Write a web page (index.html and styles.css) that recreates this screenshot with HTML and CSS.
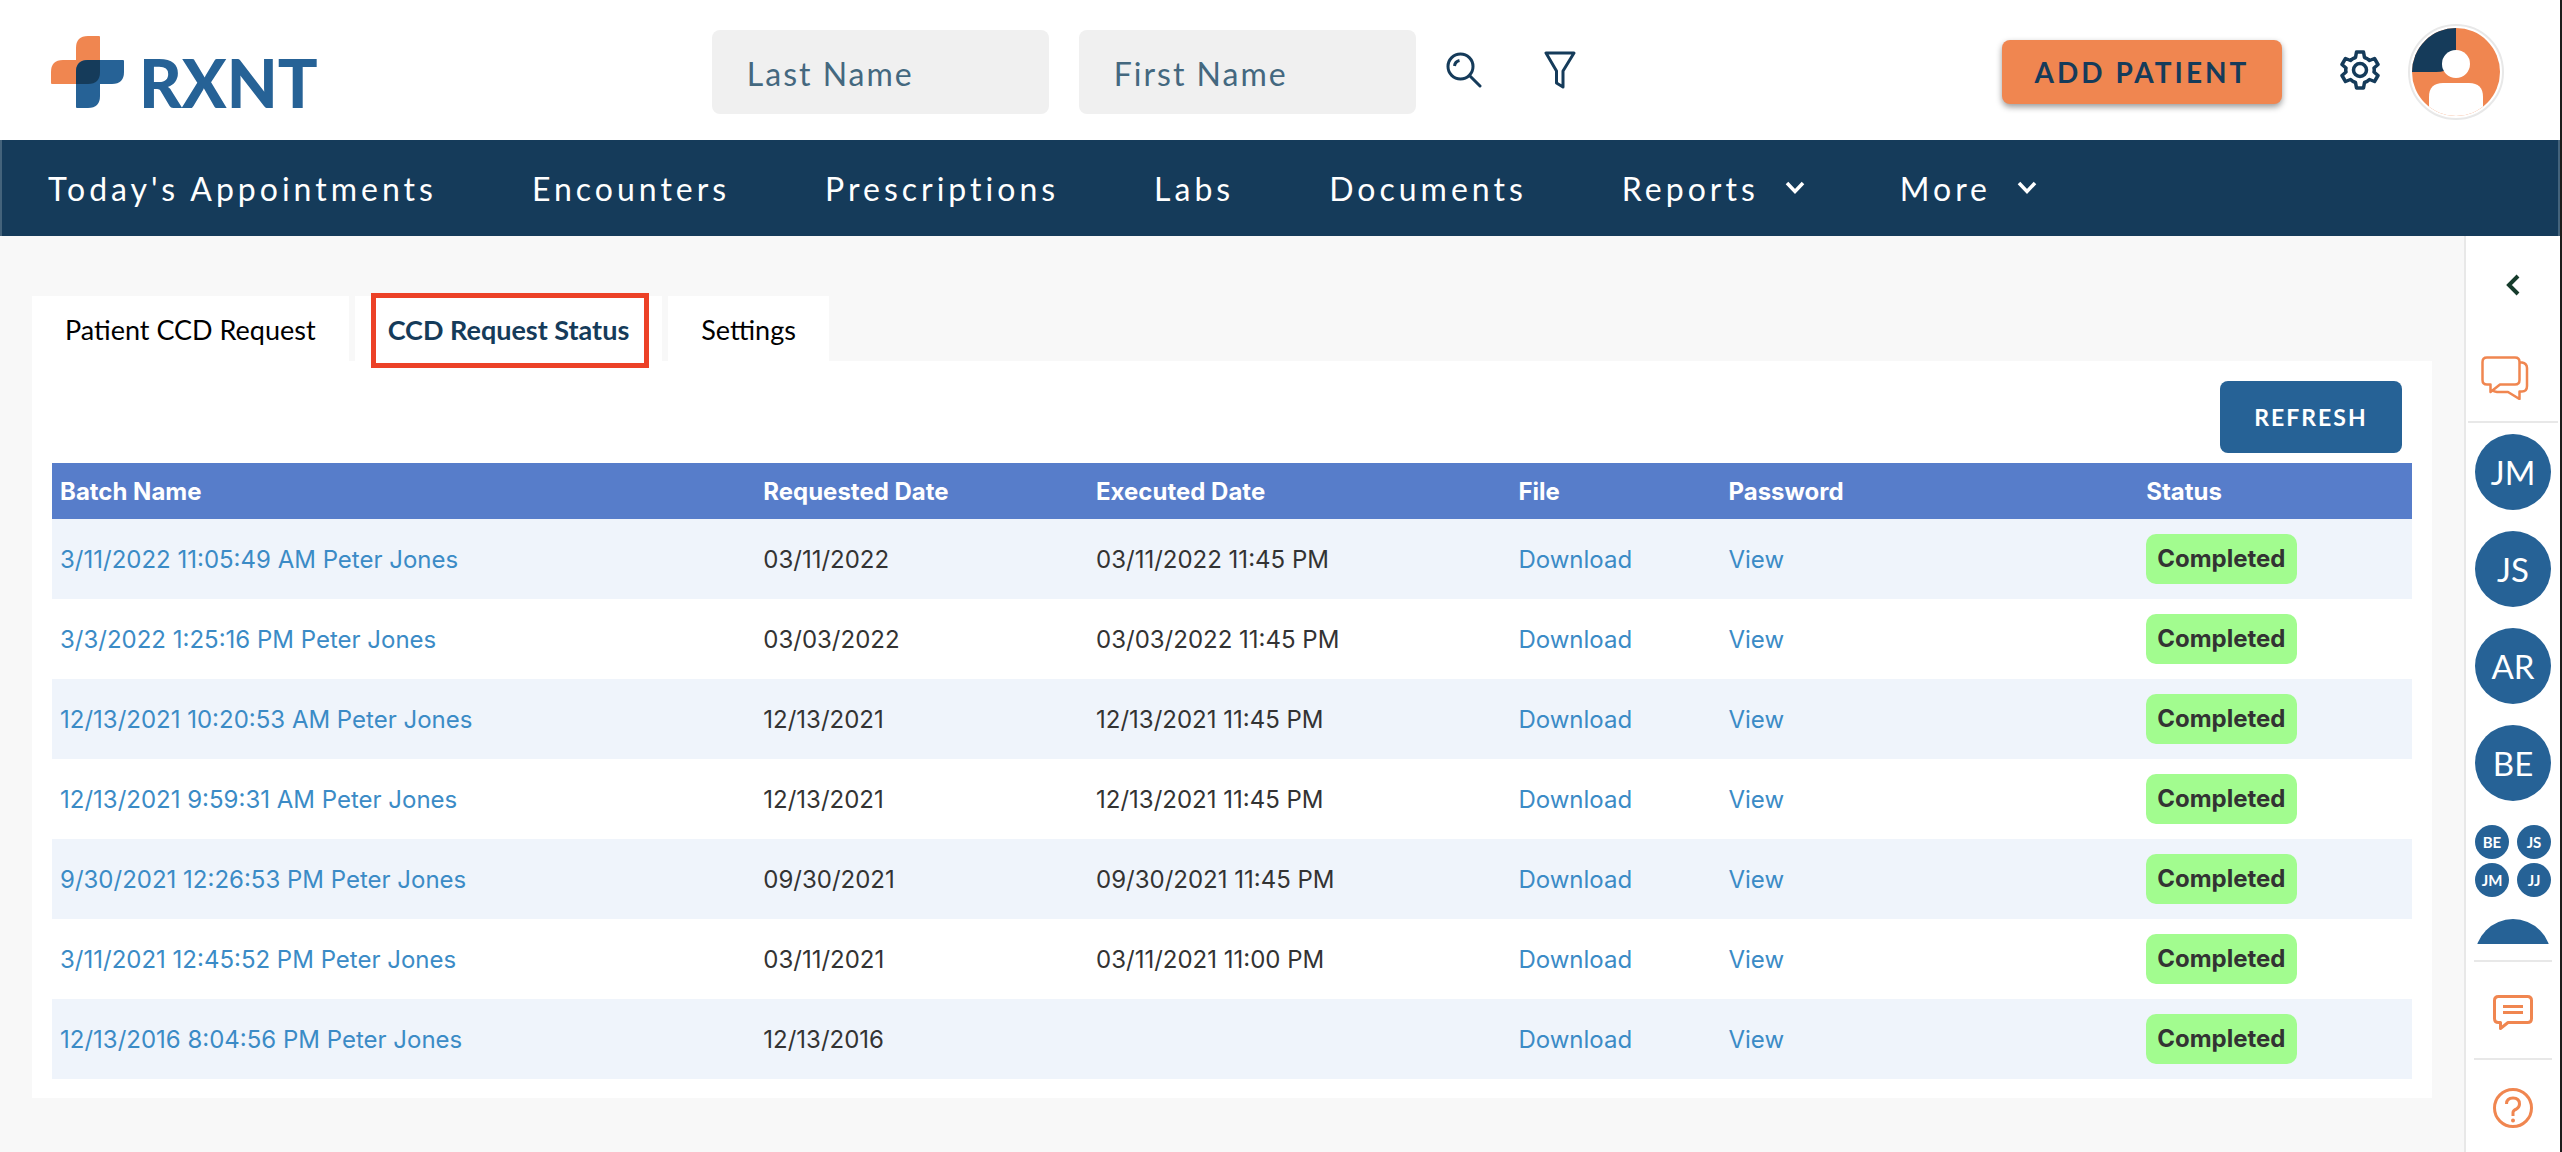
FILE: index.html
```html
<!DOCTYPE html>
<html lang="en">
<head>
  <meta charset="UTF-8">
  <title>RXNT - CCD Request Status</title>
  <link rel="stylesheet" href="styles.css">
</head>
<body>
  <header class="topbar">
    <a class="logo" href="#">
      <svg width="74" height="72" viewBox="0 0 74 72" aria-hidden="true">
        <path fill="#f08650" d="M25 24V12Q25 0 37 0H48Q49 0 49 1V48H1Q0 48 0 47V36Q0 24 12 24Z"/>
        <path fill="#266296" d="M37 24H72Q73 24 73 25V36Q73 48 61 48H49V60Q49 72 37 72H26Q25 72 25 71V36Q25 24 37 24Z"/>
        <path fill="#153b5a" d="M25 48V36Q25 24 37 24H49V36Q49 48 37 48Z"/>
      </svg>
      <span>RXNT</span>
    </a>

    <form class="search">
      <input type="text" aria-label="Last Name" placeholder="Last Name">
      <input type="text" aria-label="First Name" placeholder="First Name">
      <button class="icon-btn" type="button" aria-label="Search">
        <svg width="36" height="36" viewBox="0 0 36 36" fill="none" stroke="#153b5a" stroke-width="3" stroke-linecap="round">
          <circle cx="14.500" cy="14.500" r="12.500"/>
          <path d="M24 24L34 34" stroke-width="3"/>
          <path d="M8.500 14Q9 9.500 13.500 8.500" stroke-linecap="butt"/>
        </svg>
      </button>
      <button class="icon-btn" type="button" aria-label="Filter">
        <svg width="32" height="38" viewBox="0 0 32 38" fill="none" stroke="#153b5a" stroke-width="3" stroke-linejoin="round">
          <path d="M2 2H30L19 20V36L12.500 32V20Z"/>
        </svg>
      </button>
    </form>

    <div class="actions">
      <button class="add-btn" type="button">ADD PATIENT</button>
      <button class="gear-btn" type="button" aria-label="Settings">
        <svg width="40" height="40" viewBox="0 0 40 40" fill="none" stroke="#153b5a" stroke-width="3.500" stroke-linejoin="round">
          <path d="M16.500 2H23.500L24.500 7.500Q27.500 8.500 29.500 10.500L34.500 8.500L38 14.500L34 18Q34.500 20 34 22L38 25.500L34.500 31.500L29.500 29.500Q27.500 31.500 24.500 32.500L23.500 38H16.500L15.500 32.500Q12.500 31.500 10.500 29.500L5.500 31.500L2 25.500L6 22Q5.500 20 6 18L2 14.500L5.500 8.500L10.500 10.500Q12.500 8.500 15.500 7.500Z"/>
          <circle cx="20" cy="20" r="6.500"/>
        </svg>
      </button>
      <button class="avatar-btn" type="button" aria-label="Account">
        <svg width="88" height="88" viewBox="0 0 88 88">
          <defs><clipPath id="round"><circle cx="44" cy="44" r="44"/></clipPath></defs>
          <g clip-path="url(#round)">
            <rect width="88" height="88" fill="#f08650"/>
            <path d="M0 0H44V24Q44 44 24 44H0Z" fill="#153b5a"/>
            <circle cx="44" cy="36" r="14" fill="#fff"/>
            <path d="M17 88V69Q17 55 31 55H57Q71 55 71 69V88Z" fill="#fff"/>
          </g>
        </svg>
      </button>
    </div>
  </header>

  <nav class="menu">
    <a href="#">Today's Appointments</a>
    <a href="#">Encounters</a>
    <a href="#">Prescriptions</a>
    <a href="#">Labs</a>
    <a href="#">Documents</a>
    <a href="#">Reports
      <svg width="20" height="14" viewBox="0 0 20 14"><path d="M2 2L10 10.500L18 2" fill="none" stroke="#fff" stroke-width="3.500"/></svg>
    </a>
    <a href="#">More
      <svg width="20" height="14" viewBox="0 0 20 14"><path d="M2 2L10 10.500L18 2" fill="none" stroke="#fff" stroke-width="3.500"/></svg>
    </a>
  </nav>

  <div class="page">
    <main class="content">
      <div class="tabs">
        <a class="tab" href="#">Patient CCD Request</a>
        <a class="tab active" href="#">CCD Request Status</a>
        <a class="tab" href="#">Settings</a>
      </div>

      <section class="panel">
        <button class="refresh-btn" type="button">REFRESH</button>
        <table class="batches">
          <thead>
            <tr>
              <th class="col-batch">Batch Name</th>
              <th class="col-requested">Requested Date</th>
              <th class="col-executed">Executed Date</th>
              <th class="col-file">File</th>
              <th class="col-password">Password</th>
              <th>Status</th>
            </tr>
          </thead>
          <tbody>
            <tr>
              <td><a href="#">3/11/2022 11:05:49 AM Peter Jones</a></td>
              <td>03/11/2022</td>
              <td>03/11/2022 11:45 PM</td>
              <td><a href="#">Download</a></td>
              <td><a href="#">View</a></td>
              <td><span class="badge">Completed</span></td>
            </tr>
            <tr>
              <td><a href="#">3/3/2022 1:25:16 PM Peter Jones</a></td>
              <td>03/03/2022</td>
              <td>03/03/2022 11:45 PM</td>
              <td><a href="#">Download</a></td>
              <td><a href="#">View</a></td>
              <td><span class="badge">Completed</span></td>
            </tr>
            <tr>
              <td><a href="#">12/13/2021 10:20:53 AM Peter Jones</a></td>
              <td>12/13/2021</td>
              <td>12/13/2021 11:45 PM</td>
              <td><a href="#">Download</a></td>
              <td><a href="#">View</a></td>
              <td><span class="badge">Completed</span></td>
            </tr>
            <tr>
              <td><a href="#">12/13/2021 9:59:31 AM Peter Jones</a></td>
              <td>12/13/2021</td>
              <td>12/13/2021 11:45 PM</td>
              <td><a href="#">Download</a></td>
              <td><a href="#">View</a></td>
              <td><span class="badge">Completed</span></td>
            </tr>
            <tr>
              <td><a href="#">9/30/2021 12:26:53 PM Peter Jones</a></td>
              <td>09/30/2021</td>
              <td>09/30/2021 11:45 PM</td>
              <td><a href="#">Download</a></td>
              <td><a href="#">View</a></td>
              <td><span class="badge">Completed</span></td>
            </tr>
            <tr>
              <td><a href="#">3/11/2021 12:45:52 PM Peter Jones</a></td>
              <td>03/11/2021</td>
              <td>03/11/2021 11:00 PM</td>
              <td><a href="#">Download</a></td>
              <td><a href="#">View</a></td>
              <td><span class="badge">Completed</span></td>
            </tr>
            <tr>
              <td><a href="#">12/13/2016 8:04:56 PM Peter Jones</a></td>
              <td>12/13/2016</td>
              <td></td>
              <td><a href="#">Download</a></td>
              <td><a href="#">View</a></td>
              <td><span class="badge">Completed</span></td>
            </tr>
          </tbody>
        </table>
      </section>
    </main>

    <aside class="sidebar">
      <button class="side-btn collapse" type="button" aria-label="Expand">
        <svg width="14" height="22" viewBox="0 0 14 22"><path d="M12 2L3 11L12 20" fill="none" stroke="#163c2c" stroke-width="4"/></svg>
      </button>
      <button class="side-btn chats" type="button" aria-label="Chats">
        <svg width="48" height="44" viewBox="0 0 48 44" fill="none" stroke="#f08650" stroke-width="2.500" stroke-linejoin="round">
          <path d="M6 1.500H34Q38.500 1.500 38.500 6V24Q38.500 28.500 34 28.500H19L9.500 36V28.500H6Q1.500 28.500 1.500 24V6Q1.500 1.500 6 1.500Z"/>
          <path d="M38.500 6.500H41Q46 7.500 46 12V30Q46 35.500 41 35.500H38.500V43L27 36H16Q13 35.500 11.500 34.500"/>
        </svg>
      </button>
      <div class="people">
        <button class="person" type="button">JM</button>
        <button class="person" type="button">JS</button>
        <button class="person" type="button">AR</button>
        <button class="person" type="button">BE</button>
        <button class="group" type="button">
          <span>BE</span><span>JS</span><span>JM</span><span>JJ</span>
        </button>
        <button class="person" type="button" aria-label="Next contact"></button>
      </div>
      <button class="side-btn boxed" type="button" aria-label="Feedback">
        <svg width="40" height="36" viewBox="0 0 40 36" fill="none" stroke="#f08650" stroke-width="3" stroke-linejoin="round">
          <path d="M5.500 1.500H34.500Q38.500 1.500 38.500 5.500V23.500Q38.500 27.500 34.500 27.500H15L7.500 33.500V27.500H5.500Q1.500 27.500 1.500 23.500V5.500Q1.500 1.500 5.500 1.500Z"/>
          <path d="M10 11.500H30M10 17.500H30"/>
        </svg>
      </button>
      <button class="side-btn boxed" type="button" aria-label="Help">
        <svg width="40" height="40" viewBox="0 0 40 40" fill="none" stroke="#f08650" stroke-width="3">
          <circle cx="20" cy="20" r="18.500"/>
          <path d="M13.500 16Q13.500 10 20 10Q26.500 10 26.500 16Q26.500 19 23.500 21Q20 22.500 20 24.500V28"/>
          <circle cx="20" cy="32.500" r="2" fill="#f08650" stroke="none"/>
        </svg>
      </button>
    </aside>
  </div>
</body>
</html>
```
FILE: styles.css
```css
* {
  box-sizing: border-box;
}
body {
  margin: 0;
  min-height: 100vh;
  display: flex;
  flex-direction: column;
  border-right: 2px solid #1c1c1c;
  background: #f8f8f8;
  color: #333;
  font-family: Lato, "Open Sans", sans-serif;
}
a {
  text-decoration: none;
}
button {
  border: 0;
  padding: 0;
  background: none;
  font-family: inherit;
  cursor: pointer;
}
svg {
  display: block;
}

/* header */
.topbar {
  display: flex;
  align-items: center;
  justify-content: space-between;
  height: 140px;
  padding: 4px 56px 0 51px;
  background: #fff;
}
.logo {
  display: flex;
  align-items: flex-end;
  gap: 14px;
  color: #266296;
}
.logo span {
  font-size: 66px;
  font-weight: 900;
  line-height: 50px;
}
.search {
  display: flex;
  align-items: center;
}
.search input {
  width: 337px;
  height: 84px;
  margin-right: 30px;
  padding: 2px 35px 0;
  border: 0;
  border-radius: 8px;
  background: #f0f0f0;
  color: #153b5a;
  font-family: inherit;
  font-size: 32px;
  letter-spacing: 2px;
}
.search input + input {
  margin-right: 0;
}
.search input::placeholder {
  color: #44687f;
  opacity: 1;
}
.icon-btn {
  display: flex;
  justify-content: center;
  width: 96px;
  padding-bottom: 4px;
}
.actions {
  display: flex;
  align-items: center;
}
.add-btn {
  width: 280px;
  height: 64px;
  border-radius: 8px;
  background: #f08650;
  box-shadow: 0 3px 6px rgba(0, 0, 0, 0.4);
  color: #153b5a;
  font-size: 28px;
  font-weight: 700;
  letter-spacing: 3px;
}
.gear-btn {
  margin: 0 28px 0 58px;
  padding-bottom: 4px;
}
.avatar-btn {
  padding: 2px;
  border: 2px solid #e8e8e8;
  border-radius: 50%;
}

/* navigation */
.menu {
  display: flex;
  align-items: center;
  gap: 95px;
  height: 96px;
  padding: 0 46px;
  border: solid #44637b;
  border-width: 0 2px;
  background: #153b5a;
}
.menu a {
  display: flex;
  align-items: center;
  gap: 26px;
  color: #fff;
  font-size: 32px;
  letter-spacing: 4px;
}

/* tabs and table */
.page {
  display: flex;
  flex: 1;
}
.content {
  flex: 1;
  padding: 60px 32px 54px;
}
.tabs {
  display: flex;
  gap: 6px;
}
.tab {
  height: 65px;
  padding: 0 33px;
  background: #fff;
  color: #000;
  font-size: 27px;
  line-height: 68px;
}
.tab.active {
  position: relative;
  color: #153b5a;
  font-weight: 700;
}
.tab.active::after {
  content: "";
  position: absolute;
  inset: -3px 13px -7px 16px;
  border: 5px solid #ec4127;
}
.panel {
  padding: 20px 20px 19px;
  background: #fff;
}
.refresh-btn {
  display: block;
  width: 182px;
  height: 72px;
  margin: 0 10px 10px auto;
  border-radius: 8px;
  background: #266296;
  color: #fff;
  font-size: 23px;
  font-weight: 700;
  letter-spacing: 2px;
}
.batches {
  width: 100%;
  table-layout: fixed;
  border-collapse: collapse;
  font-family: Inter, sans-serif;
  font-size: 24px;
}
.batches th,
.batches td {
  padding: 0 8px;
  text-align: left;
}
.batches th {
  height: 56px;
  background: #577dca;
  color: #fff;
  font-weight: 700;
}
.batches td {
  height: 80px;
}
.batches tbody tr:nth-child(odd) {
  background: #eff4fb;
}
.batches a {
  color: #3b8bc6;
}
.col-batch { width: 29.8%; }
.col-requested { width: 14.1%; }
.col-executed { width: 17.9%; }
.col-file { width: 8.9%; }
.col-password { width: 17.7%; }
.badge {
  display: inline-block;
  padding: 0 11px;
  border-radius: 10px;
  background: #a2fc8f;
  font-weight: 700;
  line-height: 50px;
}

/* right rail */
.sidebar {
  display: flex;
  flex-direction: column;
  align-items: center;
  width: 96px;
  border-left: 2px solid #e8e8e8;
  background: #fff;
}
.side-btn {
  display: flex;
  align-items: center;
  justify-content: center;
  width: 100%;
}
.collapse {
  height: 98px;
}
.chats {
  width: 90px;
  height: 89px;
  padding-right: 16px;
  border-bottom: 2px solid #e8e8e8;
}
.people {
  display: flex;
  flex-direction: column;
  gap: 21px;
  height: 521px;
  padding-top: 11px;
  overflow: hidden;
}
.person {
  flex: none;
  width: 76px;
  height: 76px;
  border-radius: 50%;
  background: #266296;
  color: #fff;
  font-size: 33px;
}
.group {
  display: grid;
  grid-template-columns: 34px 34px;
  gap: 4px 8px;
  padding: 3px 0 1px;
}
.group span {
  height: 34px;
  border-radius: 50%;
  background: #266296;
  color: #fff;
  font-size: 15px;
  font-weight: 700;
  line-height: 35px;
}
.boxed {
  width: 78px;
  height: 98px;
  border-top: 2px solid #e8e8e8;
}
.people + .boxed {
  margin-top: 16px;
  padding-top: 6px;
}
```
